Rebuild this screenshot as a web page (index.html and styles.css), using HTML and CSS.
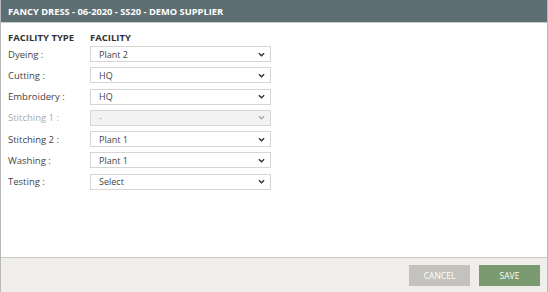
FILE: index.html
```html
<!DOCTYPE html>
<html lang="en">
<head>
    <meta charset="UTF-8">
    <title>Facility Selection</title>
    <link rel="stylesheet" href="styles.css">
</head>
<body>
    <div class="modal">
        <div class="modal-header">FANCY DRESS - 06-2020 - SS20 - DEMO SUPPLIER</div>
        <div class="modal-body">
            <div class="row head">
                <div class="label">FACILITY TYPE</div>
                <div class="field">FACILITY</div>
            </div>
            <div class="row">
                <label class="label">Dyeing :</label>
                <div class="select"><span>Plant 2</span><svg viewBox="0 0 8 5"><path d="M1 1l3 3 3-3"/></svg></div>
            </div>
            <div class="row">
                <label class="label">Cutting :</label>
                <div class="select"><span>HQ</span><svg viewBox="0 0 8 5"><path d="M1 1l3 3 3-3"/></svg></div>
            </div>
            <div class="row">
                <label class="label">Embroidery :</label>
                <div class="select"><span>HQ</span><svg viewBox="0 0 8 5"><path d="M1 1l3 3 3-3"/></svg></div>
            </div>
            <div class="row disabled">
                <label class="label">Stitching 1 :</label>
                <div class="select"><span>-</span><svg viewBox="0 0 8 5"><path d="M1 1l3 3 3-3"/></svg></div>
            </div>
            <div class="row">
                <label class="label">Stitching 2 :</label>
                <div class="select"><span>Plant 1</span><svg viewBox="0 0 8 5"><path d="M1 1l3 3 3-3"/></svg></div>
            </div>
            <div class="row">
                <label class="label">Washing :</label>
                <div class="select"><span>Plant 1</span><svg viewBox="0 0 8 5"><path d="M1 1l3 3 3-3"/></svg></div>
            </div>
            <div class="row">
                <label class="label">Testing :</label>
                <div class="select"><span>Select</span><svg viewBox="0 0 8 5"><path d="M1 1l3 3 3-3"/></svg></div>
            </div>
        </div>
        <div class="modal-footer">
            <button class="btn cancel">CANCEL</button>
            <button class="btn save">SAVE</button>
        </div>
    </div>
</body>
</html>
```

FILE: styles.css
```css
body {
    margin: 0;
    font-family: "Open Sans", sans-serif;
    background: #fff;
}

.modal {
    width: 548px;
    height: 292px;
    box-sizing: border-box;
    border-left: 1px solid #b8b8b8;
    border-right: 1px solid #b8b8b8;
    display: flex;
    flex-direction: column;
}

.modal-header {
    height: 22px;
    background-color: #5e6f74;
    border-bottom: 1px solid #c8cbcb;
    color: #fff;
    font-size: 9.3px;
    font-weight: bold;
    line-height: 23px;
    padding-left: 7px;
}

.modal-body {
    flex: 1;
    padding: 7px 0 0 7px;
}

.row {
    display: flex;
    align-items: center;
    height: 16px;
    margin-bottom: 5.3px;
    font-size: 9.5px;
    color: #444;
}

.row.head {
    height: 14px;
    margin-bottom: 2px;
    font-weight: bold;
    color: #333;
}

.label {
    width: 82px;
}

.select {
    width: 181px;
    height: 16px;
    box-sizing: border-box;
    border: 1px solid #d6d6d6;
    display: flex;
    align-items: center;
    justify-content: space-between;
    padding: 0 5px 0 8px;
    font-size: 9px;
    color: #444;
}

.select svg {
    width: 7px;
    height: 5px;
    fill: none;
    stroke: #333;
    stroke-width: 1.6;
}

.row.disabled {
    color: #aaa;
}

.row.disabled .select {
    background: #f2f2f2;
    color: #aaa;
}

.row.disabled .select svg {
    stroke: #aaa;
}

.modal-footer {
    height: 34px;
    background: #efeeec;
    border-top: 1px solid #c9c7c3;
    display: flex;
    justify-content: flex-end;
    align-items: center;
    gap: 9px;
    padding-right: 7px;
}

.btn {
    width: 61px;
    height: 21px;
    border: none;
    color: #fff;
    font-family: "Open Sans", sans-serif;
    font-size: 8.5px;
}

.btn.cancel {
    background: #c4c2bc;
}

.btn.save {
    background: #7a9b72;
}
```
